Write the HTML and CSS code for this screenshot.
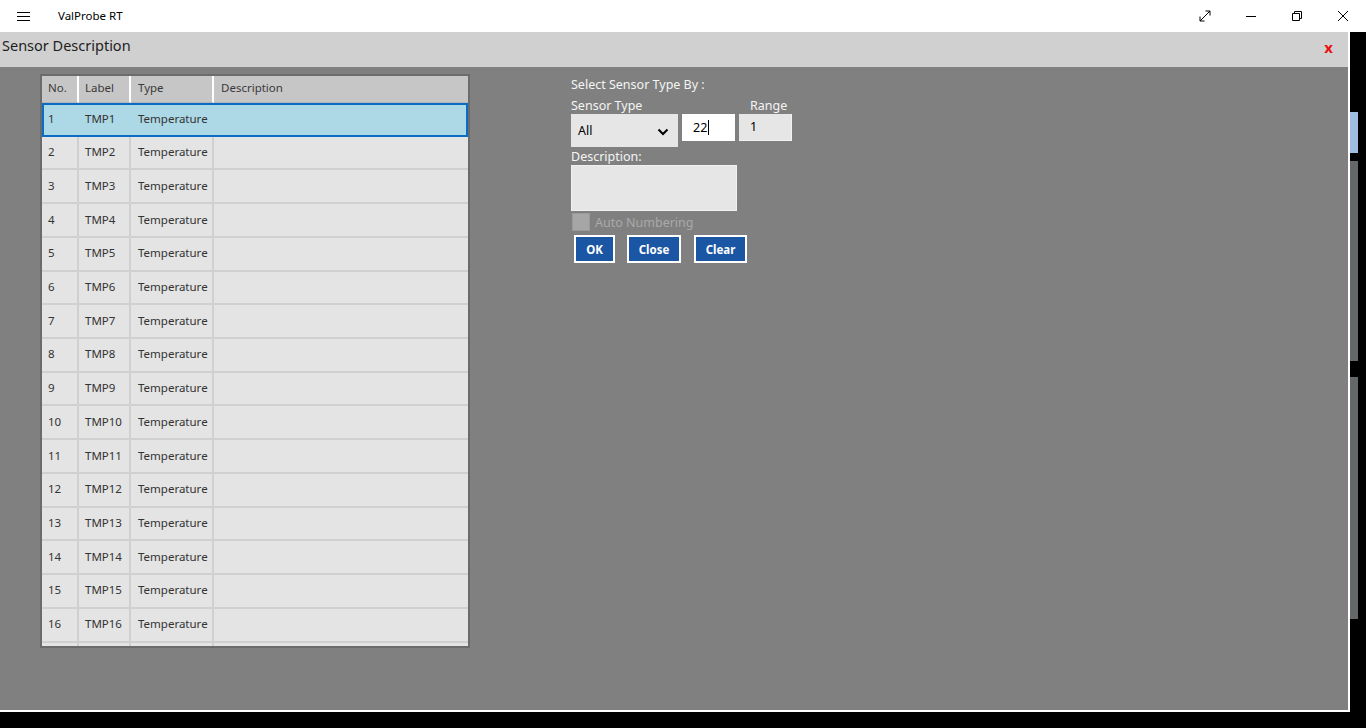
FILE: index.html
```html
<!DOCTYPE html>
<html>
<head>
<meta charset="utf-8">
<title>ValProbe RT</title>
<link rel="stylesheet" href="styles.css">
</head>
<body>
<header class="titlebar">
  <div class="tb-left">
    <svg class="hamburger" width="14" height="10" viewBox="0 0 14 10"><path d="M0 0.5H13M0 4.5H13M0 8.5H13" stroke="#000" stroke-width="1"/></svg>
    <span class="app-title">ValProbe RT</span>
  </div>
  <div class="tb-right">
    <span class="tb-btn"><svg width="12" height="12" viewBox="0 0 12 12"><path d="M1 11L11 1M6.5 1H11V5.5M1 6.5V11H5.5" stroke="#000" fill="none" stroke-width="1"/></svg></span>
    <span class="tb-btn"><svg width="12" height="12" viewBox="0 0 12 12"><path d="M1 6.5H11" stroke="#000" stroke-width="1"/></svg></span>
    <span class="tb-btn"><svg width="12" height="12" viewBox="0 0 12 12"><path d="M1.5 3.5H8.5V10.5H1.5Z M3.5 3.5V1.5H10.5V8.5H8.5" stroke="#000" fill="none" stroke-width="1"/></svg></span>
    <span class="tb-btn"><svg width="12" height="12" viewBox="0 0 12 12"><path d="M1 1L11 11M11 1L1 11" stroke="#000" stroke-width="1"/></svg></span>
  </div>
</header>
<div class="main">
  <section class="dialog">
    <div class="dlg-head">
      <span class="dlg-title">Sensor Description</span>
      <span class="dlg-close">x</span>
    </div>
    <div class="dlg-body">
      <div class="grid">
        <div class="row head">
          <div class="cell">No.</div><div class="cell">Label</div><div class="cell">Type</div><div class="cell">Description</div>
        </div>
        <div class="row sel"><div class="cell">1</div><div class="cell">TMP1</div><div class="cell">Temperature</div><div class="cell"></div></div>
        <div class="row"><div class="cell">2</div><div class="cell">TMP2</div><div class="cell">Temperature</div><div class="cell"></div></div>
        <div class="row"><div class="cell">3</div><div class="cell">TMP3</div><div class="cell">Temperature</div><div class="cell"></div></div>
        <div class="row"><div class="cell">4</div><div class="cell">TMP4</div><div class="cell">Temperature</div><div class="cell"></div></div>
        <div class="row"><div class="cell">5</div><div class="cell">TMP5</div><div class="cell">Temperature</div><div class="cell"></div></div>
        <div class="row"><div class="cell">6</div><div class="cell">TMP6</div><div class="cell">Temperature</div><div class="cell"></div></div>
        <div class="row"><div class="cell">7</div><div class="cell">TMP7</div><div class="cell">Temperature</div><div class="cell"></div></div>
        <div class="row"><div class="cell">8</div><div class="cell">TMP8</div><div class="cell">Temperature</div><div class="cell"></div></div>
        <div class="row"><div class="cell">9</div><div class="cell">TMP9</div><div class="cell">Temperature</div><div class="cell"></div></div>
        <div class="row"><div class="cell">10</div><div class="cell">TMP10</div><div class="cell">Temperature</div><div class="cell"></div></div>
        <div class="row"><div class="cell">11</div><div class="cell">TMP11</div><div class="cell">Temperature</div><div class="cell"></div></div>
        <div class="row"><div class="cell">12</div><div class="cell">TMP12</div><div class="cell">Temperature</div><div class="cell"></div></div>
        <div class="row"><div class="cell">13</div><div class="cell">TMP13</div><div class="cell">Temperature</div><div class="cell"></div></div>
        <div class="row"><div class="cell">14</div><div class="cell">TMP14</div><div class="cell">Temperature</div><div class="cell"></div></div>
        <div class="row"><div class="cell">15</div><div class="cell">TMP15</div><div class="cell">Temperature</div><div class="cell"></div></div>
        <div class="row"><div class="cell">16</div><div class="cell">TMP16</div><div class="cell">Temperature</div><div class="cell"></div></div>
        <div class="row"><div class="cell"></div><div class="cell"></div><div class="cell"></div><div class="cell"></div></div>
      </div>
      <div class="form">
        <div class="f-title">Select Sensor Type By :</div>
        <div class="f-labels">
          <span class="lbl-type">Sensor Type</span>
          <span class="lbl-range">Range</span>
        </div>
        <div class="f-controls">
          <div class="select"><span>All</span><svg width="12" height="8" viewBox="0 0 12 8"><path d="M1.5 1.5L6 6L10.5 1.5" stroke="#000" stroke-width="2" fill="none"/></svg></div>
          <div class="input">22<span class="caret"></span></div>
          <div class="range">1</div>
        </div>
        <div class="f-desc-label">Description:</div>
        <div class="textarea"></div>
        <div class="check-row"><span class="checkbox"></span><span class="check-label">Auto Numbering</span></div>
        <div class="buttons">
          <button class="btn btn-ok">OK</button>
          <button class="btn btn-close">Close</button>
          <button class="btn btn-clear">Clear</button>
        </div>
      </div>
    </div>
  </section>
  <div class="strip">
    <div class="bar blue"></div>
    <div class="bar gray1"></div>
    <div class="bar gray2"></div>
  </div>
</div>
</body>
</html>
```
FILE: styles.css
```css
html, body {
  margin: 0;
  padding: 0;
}
body {
  width: 1366px;
  height: 728px;
  overflow: hidden;
  background: #000;
  font-family: "Noto Sans", "Open Sans", sans-serif;
}
.titlebar {
  height: 32px;
  background: #fff;
  display: flex;
  align-items: center;
  justify-content: space-between;
}
.tb-left {
  display: flex;
  align-items: center;
}
.hamburger {
  margin-left: 17px;
  margin-top: 1px;
}
.app-title {
  margin-left: 27px;
  font-size: 11.5px;
  color: #000;
  margin-bottom: 1px;
}
.tb-right {
  display: flex;
}
.tb-btn {
  width: 46px;
  height: 32px;
  display: flex;
  align-items: center;
  justify-content: center;
}
.main {
  display: flex;
  align-items: flex-start;
}
.dialog {
  width: 1348px;
  height: 678px;
  border-right: 2px solid #fff;
  border-bottom: 2px solid #fff;
  background: #808080;
  display: flex;
  flex-direction: column;
}
.dlg-head {
  height: 35px;
  background: #cfd0cf;
  display: flex;
  justify-content: space-between;
  align-items: flex-start;
}
.dlg-title {
  margin-left: 2px;
  margin-top: 3px;
  font-size: 14.5px;
  color: #1e1e1e;
}
.dlg-close {
  margin-right: 15px;
  margin-top: 5px;
  font-size: 15px;
  font-weight: bold;
  color: #e81010;
}
.dlg-body {
  display: flex;
  align-items: flex-start;
  padding: 7px 0 0 40px;
  gap: 101px;
}
.grid {
  width: 426px;
  height: 570px;
  border: 2px solid #6b6b6b;
  background: #e3e4e3;
  overflow: hidden;
  font-size: 11.5px;
  color: #333;
}
.row {
  display: grid;
  grid-template-columns: 37px 52px 83px 254px;
  height: 33.73px;
  box-sizing: border-box;
}
.row .cell {
  box-sizing: border-box;
  border-right: 2px solid #d0d0d0;
  border-bottom: 2px solid #d0d0d0;
  padding-left: 6px;
  padding-bottom: 2px;
  display: flex;
  align-items: center;
  white-space: nowrap;
}
.row .cell:nth-child(3),
.row .cell:nth-child(4) { padding-left: 7px; }
.row .cell:last-child { border-right: none; }
.row.head {
  height: 27px;
  background: #c6c6c6;
  color: #3a3a3a;
}
.row.head .cell {
  border-right-color: #fff;
  border-bottom: 1px solid #b4b4b4;
  padding-bottom: 3px;
}
.row.sel {
  background: #add8e6;
  border: 2px solid #0b6cc4;
  grid-template-columns: 35px 52px 83px 252px;
}
.row.sel .cell {
  border: none;
  padding-left: 4px;
  padding-bottom: 3px;
}
.row.sel .cell:nth-child(2) { padding-left: 6px; }
.row.sel .cell:nth-child(3) { padding-left: 7px; }

.form {
  padding-top: 2px;
  color: #f4f4f4;
  font-size: 12.5px;
  width: 230px;
}
.f-title { height: 19px; line-height: 17px; }
.f-labels {
  height: 19px;
  display: flex;
  line-height: 22px;
}
.lbl-type { width: 179px; }
.f-controls {
  display: flex;
  gap: 4px;
  align-items: flex-start;
}
.select {
  width: 107px;
  height: 33px;
  background: #e6e6e6;
  color: #000;
  display: flex;
  align-items: center;
  justify-content: space-between;
  box-sizing: border-box;
  padding: 0 9px 0 7px;
}
.select svg { margin-top: 2px; }
.input {
  width: 53px;
  height: 27px;
  background: #fff;
  color: #000;
  box-sizing: border-box;
  padding-left: 11px;
  line-height: 25px;
  display: flex;
  align-items: center;
}
.caret {
  display: inline-block;
  width: 1px;
  height: 15px;
  background: #000;
  margin-left: 1px;
}
.range {
  width: 53px;
  height: 27px;
  background: #e6e6e6;
  color: #000;
  box-sizing: border-box;
  border-right: 1px solid #f2f2f2;
  border-bottom: 1px solid #f2f2f2;
  padding-left: 11px;
  line-height: 25px;
}
.f-desc-label {
  margin-top: 1px;
  height: 17px;
  line-height: 17px;
}
.textarea {
  width: 166px;
  height: 46px;
  background: #e6e6e6;
  box-sizing: border-box;
  border: 1px solid #f0f0f0;
}
.check-row {
  display: flex;
  align-items: center;
  margin-top: 1px;
  height: 20px;
}
.checkbox {
  width: 18px;
  height: 18px;
  margin-left: 1px;
  background: #a6a6a6;
  box-sizing: border-box;
  border: 1px solid #999;
}
.check-label {
  margin-left: 5px;
  color: #a9a9a9;
  font-size: 12.5px;
}
.buttons {
  display: flex;
  margin-top: 3px;
  margin-left: 3px;
}
.btn {
  height: 28px;
  box-sizing: border-box;
  border: 2px solid #fff;
  background: #1a56a4;
  color: #fff;
  font-family: "Noto Sans", "Open Sans", sans-serif;
  font-weight: bold;
  font-size: 11.5px;
  padding: 0;
}
.btn-ok { width: 41px; }
.btn-close { width: 54px; margin-left: 12px; }
.btn-clear { width: 53px; margin-left: 13px; }

.strip {
  width: 8px;
  display: flex;
  flex-direction: column;
}
.bar { width: 8px; }
.bar.blue { margin-top: 80px; height: 41px; background: #a0bee2; }
.bar.gray1 { margin-top: 8px; height: 200px; background: #646868; }
.bar.gray2 { margin-top: 16px; height: 242px; background: #646868; }
```
